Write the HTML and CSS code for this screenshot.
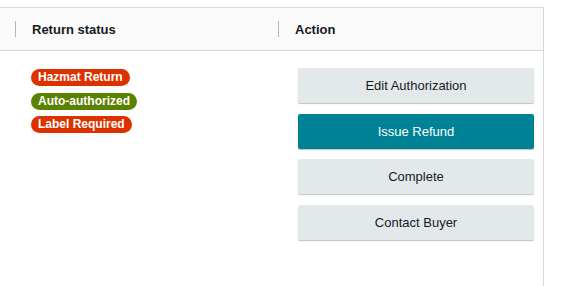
FILE: index.html
```html
<!DOCTYPE html>
<html>
<head>
<meta charset="utf-8">
<link rel="stylesheet" href="styles.css">
</head>
<body>
<div class="table">
  <div class="thead">
    <div class="th th-status"><span class="sep"></span><span class="label">Return status</span></div>
    <div class="th th-action"><span class="sep"></span><span class="label">Action</span></div>
  </div>
  <div class="tbody">
    <div class="td td-status">
      <span class="badge red">Hazmat Return</span>
      <span class="badge green">Auto-authorized</span>
      <span class="badge red">Label Required</span>
    </div>
    <div class="td td-action">
      <button class="btn">Edit Authorization</button>
      <button class="btn primary">Issue Refund</button>
      <button class="btn">Complete</button>
      <button class="btn">Contact Buyer</button>
    </div>
  </div>
</div>
</body>
</html>
```
FILE: styles.css
```css
html, body {
  margin: 0;
  padding: 0;
  background: #ffffff;
}
body {
  padding-top: 7px;
  font-family: "Liberation Sans", Arial, sans-serif;
  color: #0f1111;
}
.table {
  width: 544px;
  height: 279px;
  border-top: 1px solid #d5dbdb;
  border-right: 1px solid #d5dbdb;
  box-sizing: border-box;
}
.thead {
  display: flex;
  height: 43px;
  background: #fafafa;
  border-bottom: 1px solid #d5dbdb;
  box-sizing: border-box;
}
.th {
  display: flex;
  align-items: center;
  font-weight: bold;
  font-size: 13px;
  color: #16191f;
  box-sizing: border-box;
}
.th-status {
  width: 278px;
  padding-left: 15px;
}
.th-action {
  flex: 1;
}
.sep {
  width: 1px;
  height: 16px;
  background: #aab7b8;
  margin-right: 16px;
}
.tbody {
  display: flex;
}
.td-status {
  width: 278px;
  padding: 18px 0 0 31px;
  box-sizing: border-box;
  display: flex;
  flex-direction: column;
  align-items: flex-start;
  gap: 6px;
}
.badge {
  display: inline-block;
  height: 17px;
  line-height: 17px;
  padding: 0 7px;
  border-radius: 9px;
  color: #fff;
  font-size: 12px;
  font-weight: bold;
}
.badge + .badge {
  margin-top: 0.5px;
}
.red { background: #dd3200; }
.green { background: #5b8100; }
.td-action {
  flex: 1;
  padding: 17px 0 0 20px;
  display: flex;
  flex-direction: column;
  gap: 10.5px;
}
.btn {
  width: 236px;
  height: 35px;
  border: none;
  border-radius: 2px;
  background: #e3e9ea;
  box-shadow: 0 1px 1px rgba(0, 0, 0, 0.25);
  font-family: "Liberation Sans", Arial, sans-serif;
  font-size: 13px;
  color: #16191f;
  padding: 0;
}
.btn.primary {
  background: #008296;
  color: #ffffff;
}
```
